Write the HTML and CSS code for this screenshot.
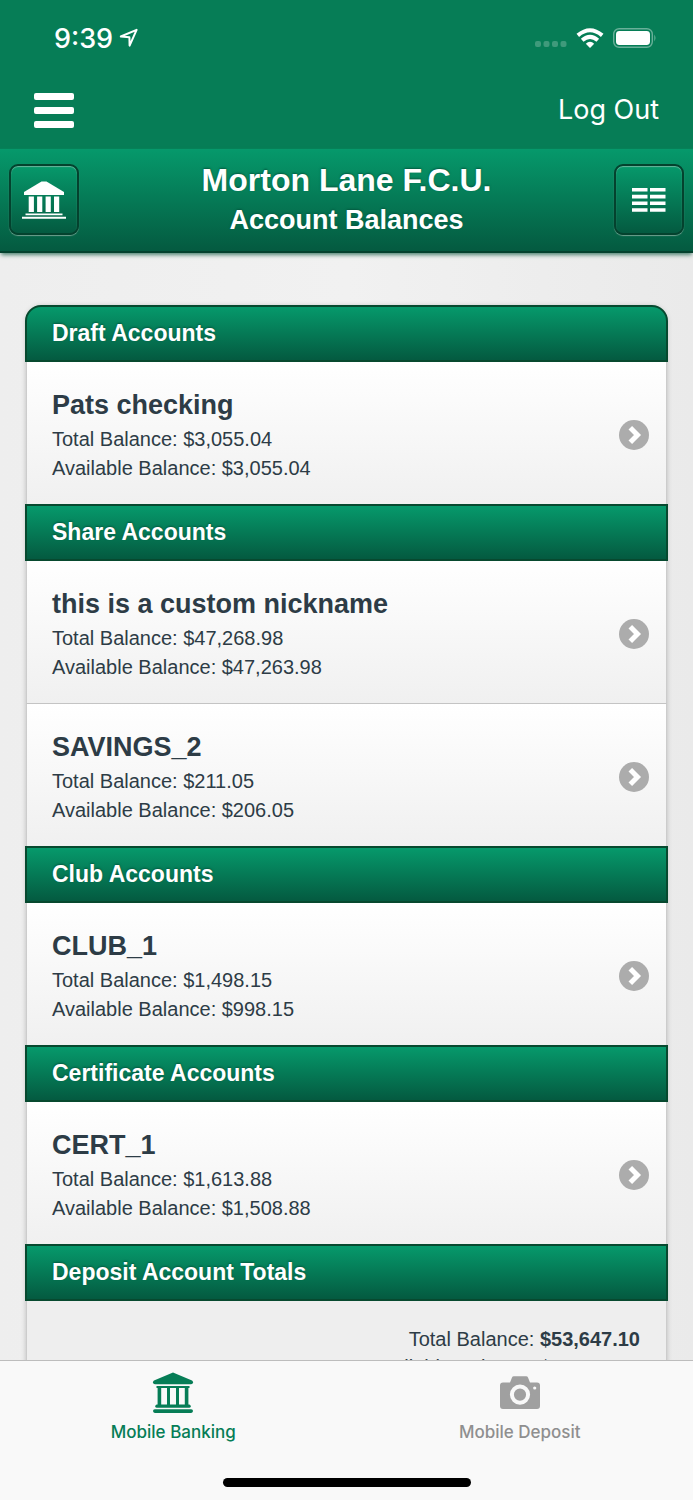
FILE: index.html
```
<!DOCTYPE html>
<html lang="en">
<head>
<meta charset="utf-8">
<meta name="viewport" content="width=device-width, initial-scale=1">
<title>Account Balances</title>
<link rel="stylesheet" href="styles.css">
</head>
<body>
<svg class="sprite" aria-hidden="true">
  <symbol id="chevron" viewBox="0 0 30 30">
    <circle cx="15" cy="15" r="15" fill="#acacac"/>
    <path d="M11.3 7.8 L18.5 15 L11.3 22.2" fill="none" stroke="#fff" stroke-width="5"/>
  </symbol>
</svg>
<div class="app">
  <div class="status">
    <div class="status-group">
      <span class="time">9:39</span>
      <svg class="location" viewBox="0 0 20 20"><path d="M1.8 8.5 L17.6 1.8 L10.6 17.6 L10.4 9.2 Z" fill="none" stroke="#fff" stroke-width="2" stroke-linejoin="round"/></svg>
    </div>
    <div class="status-group status-right">
      <svg width="32" height="8" viewBox="0 0 32 8" fill="#3f9a7b"><rect x="0" y="1" width="6" height="6" rx="2"/><rect x="8.5" y="1" width="6" height="6" rx="2"/><rect x="17" y="1" width="6" height="6" rx="2"/><rect x="25.5" y="1" width="6" height="6" rx="2"/></svg>
      <svg class="wifi" width="28" height="20" viewBox="0 0 28 20" fill="none" stroke="#fff" stroke-width="4"><path d="M1.8 7.4 Q14 -2.8 26.2 7.4"/><path d="M6.2 12.2 Q14 5.4 21.8 12.2"/><path d="M9.8 15.7 Q14 12 18.2 15.7 L14 20 Z" fill="#fff" stroke="none"/></svg>
      <svg width="44" height="20" viewBox="0 0 44 20"><rect x="0.7" y="0.7" width="38.6" height="18.6" rx="5.5" fill="none" stroke="#69b099" stroke-width="1.4"/><rect x="3" y="3" width="34" height="14" rx="3.4" fill="#fff"/><path d="M41.3 6.6 Q43.7 10 41.3 13.4 Z" fill="#69b099"/></svg>
    </div>
  </div>
  <nav class="topnav">
    <button class="menu" aria-label="Menu"><span></span><span></span><span></span></button>
    <a class="logout" href="#">Log Out</a>
  </nav>
  <header class="titlebar">
    <button class="square" aria-label="Home">
      <svg width="44" height="38" viewBox="0 0 44 38" fill="#fff"><path d="M19.5 0.4 H24.5 L42 11 V14 H2 V11 Z"/><path d="M6.7 15.5h5.2V31H6.7zM15.1 15.5h5.2V31h-5.2zM23.6 15.5h5.2V31h-5.2zM32 15.5h5.2V31H32z"/><path d="M3.5 32.4h37v1.8h-37zM0 35.8h44v1.9H0z"/></svg>
    </button>
    <div class="titles"><h1>Morton Lane F.C.U.</h1><h2>Account Balances</h2></div>
    <button class="square" aria-label="Accounts list">
      <svg width="34" height="24" viewBox="0 0 34 24" fill="#fff"><path d="M0 0h15.5v3.6H0zM18 0h15.5v3.6H18zM0 6.8h15.5v3.6H0zM18 6.8h15.5v3.6H18zM0 13.5h15.5v3.6H0zM18 13.5h15.5v3.6H18zM0 20.2h15.5v3.6H0zM18 20.2h15.5v3.6H18z"/></svg>
    </button>
  </header>
  <main class="content">
    <div class="card">
      <h3 class="group">Draft Accounts</h3>
      <a class="row" href="#"><div><h4>Pats checking</h4><p>Total Balance: $3,055.04</p><p>Available Balance: $3,055.04</p></div><svg class="go"><use href="#chevron"/></svg></a>
      <h3 class="group">Share Accounts</h3>
      <a class="row" href="#"><div><h4>this is a custom nickname</h4><p>Total Balance: $47,268.98</p><p>Available Balance: $47,263.98</p></div><svg class="go"><use href="#chevron"/></svg></a>
      <a class="row" href="#"><div><h4>SAVINGS_2</h4><p>Total Balance: $211.05</p><p>Available Balance: $206.05</p></div><svg class="go"><use href="#chevron"/></svg></a>
      <h3 class="group">Club Accounts</h3>
      <a class="row" href="#"><div><h4>CLUB_1</h4><p>Total Balance: $1,498.15</p><p>Available Balance: $998.15</p></div><svg class="go"><use href="#chevron"/></svg></a>
      <h3 class="group">Certificate Accounts</h3>
      <a class="row" href="#"><div><h4>CERT_1</h4><p>Total Balance: $1,613.88</p><p>Available Balance: $1,508.88</p></div><svg class="go"><use href="#chevron"/></svg></a>
      <h3 class="group">Deposit Account Totals</h3>
      <div class="totals"><p>Total Balance: <strong>$53,647.10</strong></p><p>Available Balance: <strong>$53,032.10</strong></p></div>
    </div>
  </main>
  <footer class="tabbar">
    <div class="tabs">
      <a class="tab active" href="#">
        <svg width="42" height="42" viewBox="0 0 42 42" fill="#067d56"><path d="M21 0.5 L40 8.6 Q41 9.2 41 10.3 Q41 12.3 39 12.3 H3 Q1 12.3 1 10.3 Q1 9.2 2 8.6 Z"/><path d="M4.5 14h33v2h-33zM5.6 15h3.6v18H5.6zM15 15h3v18h-3zM24 15h3v18h-3zM32.8 15h3.6v18h-3.6z"/><rect x="3.3" y="32.6" width="35.4" height="3.2" rx="1.6"/><rect x="1" y="37.2" width="40" height="3.7" rx="1.8"/></svg>
        <span>Mobile Banking</span>
      </a>
      <a class="tab" href="#">
        <svg width="42" height="42" viewBox="0 0 42 42"><path d="M4 10.5 H11 L13 5.5 Q13.5 4.3 14.8 4.3 H27.2 Q28.5 4.3 29 5.5 L31 10.5 H38 Q41 10.5 41 13.5 V34 Q41 37 38 37 H4 Q1 37 1 34 V13.5 Q1 10.5 4 10.5 Z" fill="#a0a0a0"/><circle cx="21" cy="22.6" r="8.1" fill="#a0a0a0" stroke="#f9f9f9" stroke-width="4"/><circle cx="35.7" cy="16" r="1.6" fill="#f9f9f9"/></svg>
        <span>Mobile Deposit</span>
      </a>
    </div>
    <div class="home-indicator"></div>
  </footer>
</div>
</body>
</html>
```
FILE: styles.css
```
* { box-sizing: border-box; }
body { margin: 0; font-family: "Liberation Sans", Arial, sans-serif; background: #eee; color: #2d3c46; }
h1, h2, h3, h4, p { margin: 0; }
a { color: inherit; text-decoration: none; }
button { padding: 0; border: 0; background: none; cursor: pointer; }
svg { display: block; flex: none; }
.sprite { position: absolute; width: 0; height: 0; }
.app { height: 100vh; display: flex; flex-direction: column; overflow: hidden; }

.status { flex: none; display: flex; justify-content: space-between; align-items: center; height: 76px; padding: 0 36px 0 54px; background: #067d56; color: #fff; font-family: Inter, sans-serif; }
.status-group { display: flex; align-items: center; gap: 6px; }
.time { padding-top: 2px; font-size: 27px; font-weight: 500; line-height: 32px; }
.location { width: 20px; height: 20px; }
.status-right { gap: 9px; }
.status-right svg:first-child { align-self: flex-end; }

.topnav { flex: none; display: flex; justify-content: space-between; align-items: center; height: 72px; padding: 0 34px 4px; background: #067d56; }
.menu { display: flex; flex-direction: column; gap: 7px; width: 40px; }
.menu span { height: 7px; border-radius: 2px; background: #fff; }
.logout { color: #fff; font-family: Inter, sans-serif; font-size: 27px; line-height: 34px; }

.titlebar { flex: none; position: relative; display: flex; justify-content: space-between; align-items: flex-start; height: 105px; padding: 15px 9px 0; border-top: 1px solid #068058; border-bottom: 2px solid #04422e; background: linear-gradient(#06996b, #045a40); box-shadow: 0 3px 4px -1px #4f8573; color: #fff; text-shadow: 0 -1px 2px #045a40; }
.titles { text-align: center; }
.titles h1 { font-size: 32px; line-height: 32px; }
.titles h2 { padding-top: 8px; font-size: 27px; line-height: 32px; }
.square { display: flex; align-items: center; justify-content: center; width: 70px; height: 71px; border: 2px solid #04422e; border-radius: 9px; background: linear-gradient(#06996b, #045a40); box-shadow: inset 0 1px 1px #6ab59d, 0 1px 1px #6f9f8e; }

.content { flex: 1; min-height: 0; overflow: hidden; padding: 52px 26px 0; background: linear-gradient(90deg, #eee, #f1f1f1 50%, #eaeaea); }
.card { border-radius: 16px 16px 0 0; box-shadow: 0 1px 5px #bbb; background: #eee; }
.group { height: 57px; margin: 0 -1px; padding: 0 25px; border: 2px solid #07492f; background: linear-gradient(#06996b, #045a40); color: #fff; font-size: 23px; line-height: 53px; text-shadow: 0 -1px 2px #045a40; }
.group:first-child { border-radius: 16px 16px 0 0; }
.row { display: flex; align-items: center; justify-content: space-between; height: 142px; padding: 4px 17px 0 25px; border: solid #ccc; border-width: 0 1px; background: linear-gradient(#fff, #f0f0f0); }
.row + .row { height: 143px; border-top: 1px solid #c4c4c4; }
.row h4 { font-size: 27px; line-height: 36px; padding-bottom: 2px; }
.row p { font-size: 20px; line-height: 29px; }
.go { width: 30px; height: 30px; }
.totals { padding: 24px 26px; border: solid #ccc; border-width: 0 1px; text-align: right; }
.totals p { font-size: 20px; line-height: 28px; }

.tabbar { flex: none; display: flex; flex-direction: column; justify-content: space-between; align-items: center; height: 140px; padding: 11px 0 13px; border-top: 1px solid #bdbdbd; background: #f9f9f9; }
.tabs { display: flex; width: 100%; }
.tab { flex: 1; display: flex; flex-direction: column; align-items: center; gap: 8px; color: #8f8f8f; font-family: Inter, sans-serif; font-size: 17px; font-weight: 500; line-height: 20px; }
.tab.active { color: #067d56; }
.home-indicator { width: 248px; height: 9px; border-radius: 5px; background: #000; }
```
